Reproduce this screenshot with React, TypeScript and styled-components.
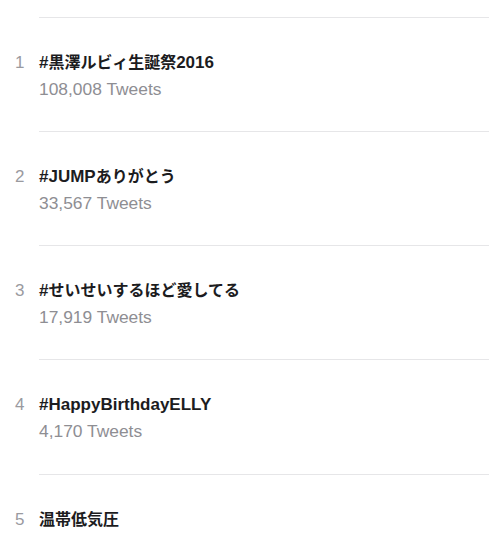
import React from "react";
import styled, { createGlobalStyle } from "styled-components";

const Global = createGlobalStyle`
  html, body { margin: 0; padding: 0; background: #ffffff; }
  body { font-family: "Liberation Sans", "Noto Sans CJK JP", sans-serif; overflow: hidden; }
`;

const List = styled.div`
  width: 489px;
  height: 540px;
  overflow: hidden;
  padding-top: 16.5px;
  box-sizing: border-box;
  background: #fff;
`;

const Row = styled.div`
  display: flex;
  flex-direction: column;
  margin-left: 39px;
  border-top: 1px solid #e6e6e8;
  height: 114.25px;
  box-sizing: border-box;
  padding-top: 33px;
  position: relative;
`;

const Rank = styled.span`
  position: absolute;
  left: -24px;
  top: 33px;
  width: 16px;
  font-size: 17px;
  line-height: 24px;
  color: #9a9a9f;
  text-align: left;
`;

const Title = styled.div`
  font-size: 17px;
  line-height: 24px;
  font-weight: bold;
  color: #1c1c1e;
  white-space: nowrap;
`;

const Kana = styled.span`
  font-size: 16px;
`;

const Count = styled.div`
  margin-top: 2px;
  font-size: 17.4px;
  line-height: 24px;
  color: #8e8e93;
`;

const trends = [
  { title: "#黒澤ルビィ生誕祭2016", count: "108,008" },
  { title: "#JUMPありがとう", count: "33,567" },
  { title: "#せいせいするほど愛してる", count: "17,919" },
  { title: "#HappyBirthdayELLY", count: "4,170" },
  { title: "温帯低気圧", count: "10,304" },
];

const splitRuns = (s: string) =>
  s.split(/([\u3000-\u9fff\uff00-\uffef]+)/).filter(Boolean);

const isCjk = (s: string) => /[\u3000-\u9fff\uff00-\uffef]/.test(s);

export default function App() {
  return (
    <>
      <Global />
      <List>
        {trends.map((t, i) => (
          <Row key={i}>
            <Rank>{i + 1}</Rank>
            <Title>
              {splitRuns(t.title).map((part, j) =>
                isCjk(part) ? <Kana key={j}>{part}</Kana> : <React.Fragment key={j}>{part}</React.Fragment>
              )}
            </Title>
            <Count>{t.count} Tweets</Count>
          </Row>
        ))}
      </List>
    </>
  );
}
